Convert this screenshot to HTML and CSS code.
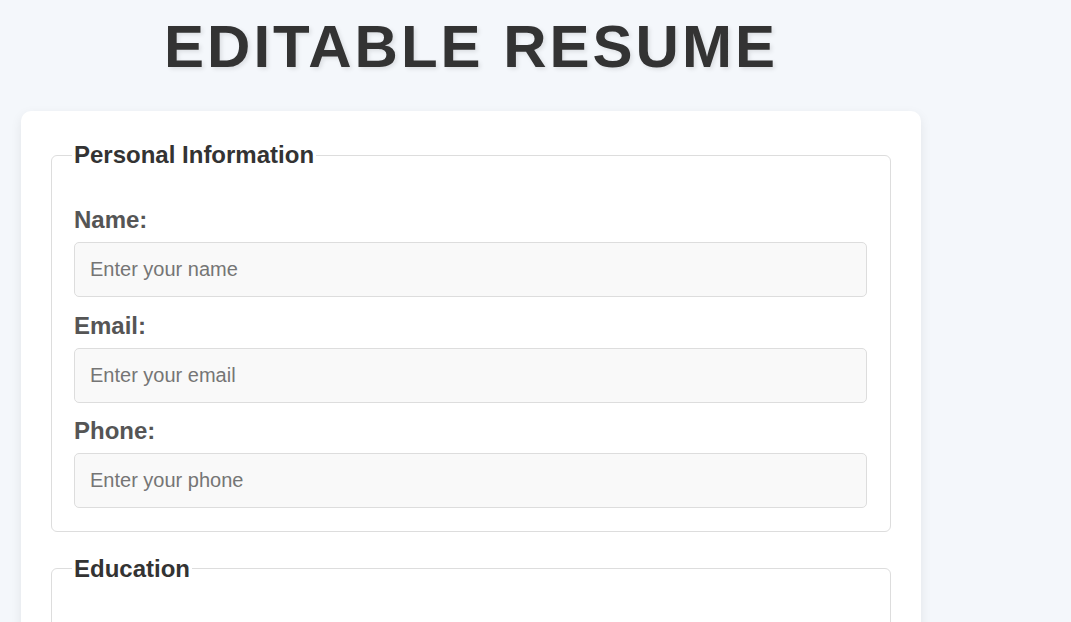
FILE: index.html
```html
<!DOCTYPE html>
<html lang="en">
<head>
<meta charset="UTF-8">
<title>Editable Resume</title>
<link rel="stylesheet" href="styles.css">
</head>
<body>
<div class="container">
  <h1 class="title">EDITABLE RESUME</h1>
  <form class="card">
    <fieldset class="section">
      <legend class="section-title">Personal Information</legend>
      <label class="field-label" for="name">Name:</label>
      <input class="field-input" id="name" type="text" placeholder="Enter your name">
      <label class="field-label" for="email">Email:</label>
      <input class="field-input" id="email" type="email" placeholder="Enter your email">
      <label class="field-label" for="phone">Phone:</label>
      <input class="field-input" id="phone" type="text" placeholder="Enter your phone">
    </fieldset>
    <fieldset class="section">
      <legend class="section-title">Education</legend>
      <label class="field-label" for="school">School:</label>
      <input class="field-input" id="school" type="text" placeholder="Enter your school">
      <label class="field-label" for="degree">Degree:</label>
      <input class="field-input" id="degree" type="text" placeholder="Enter your degree">
    </fieldset>
  </form>
</div>
</body>
</html>
```

FILE: styles.css
```css
html, body {
  margin: 0;
  padding: 0;
}

body {
  background: #f4f7fb;
  font-family: "Liberation Sans", Arial, sans-serif;
  color: #333;
  padding: 12px 21px 40px;
}

.container {
  width: 900px;
}

.title {
  margin: 0 0 30px;
  text-align: center;
  font-size: 60px;
  font-weight: bold;
  letter-spacing: 3px;
  color: #333;
  text-shadow: 2px 2px 4px rgba(0, 0, 0, 0.1);
}

.card {
  background: #fff;
  border-radius: 10px;
  padding: 30px;
  box-shadow: 0 4px 12px rgba(0, 0, 0, 0.08);
}

.section {
  margin: 0 0 23px;
  padding: 37px 23px 8px 22px;
  border: 1px solid #ddd;
  border-radius: 6px;
  min-width: 0;
}

.section-title {
  margin-left: -2px;
  padding: 0 2px;
  font-size: 24px;
  font-weight: bold;
  color: #333;
}

.field-label {
  display: block;
  margin: 0 0 8px;
  font-size: 24px;
  font-weight: bold;
  color: #555;
}

.field-input {
  display: block;
  width: 100%;
  box-sizing: border-box;
  margin: 0 0 14.5px;
  padding: 15px;
  font-family: "Liberation Sans", Arial, sans-serif;
  font-size: 20px;
  color: #333;
  background: #f9f9f9;
  border: 1px solid #ddd;
  border-radius: 5px;
  outline: none;
}

.field-input::placeholder {
  color: #757575;
}
```
